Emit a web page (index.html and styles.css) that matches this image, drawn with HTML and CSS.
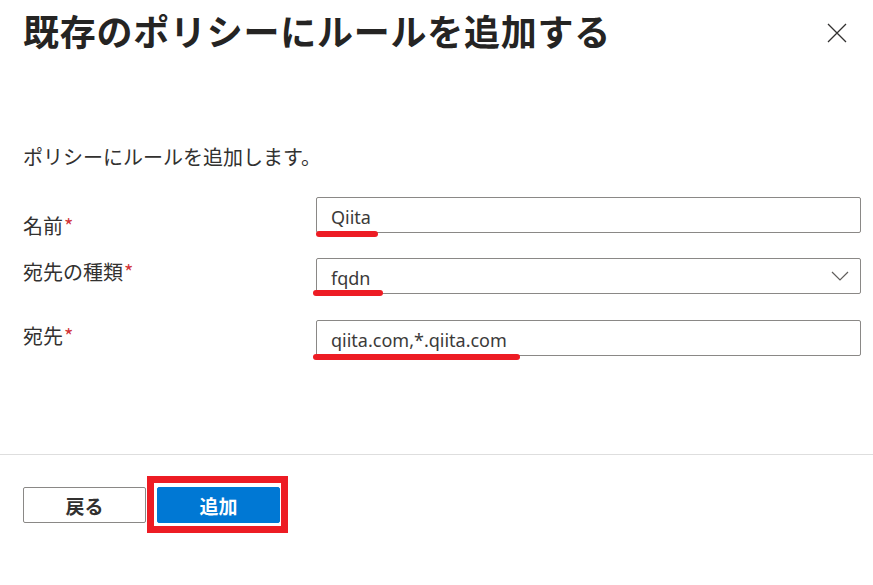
FILE: index.html
```html
<!DOCTYPE html>
<html lang="ja">
<head>
<meta charset="utf-8">
<title>既存のポリシーにルールを追加する</title>
<link rel="stylesheet" href="styles.css">
</head>
<body>
<div class="panel">
  <header class="head">
    <h1 class="title">既存のポリシーにルールを追加する</h1>
    <button class="close" aria-label="閉じる">
      <svg width="20" height="20" viewBox="0 0 20 20"><path d="M1 1 L19 19 M19 1 L1 19" stroke="#323130" stroke-width="1.3" fill="none"/></svg>
    </button>
  </header>

  <p class="desc">ポリシーにルールを追加します。</p>

  <div class="form">
    <div class="row">
      <label class="label label-1">名前<span class="req">*</span></label>
      <div class="input"><span class="value">Qiita</span></div>
    </div>
    <div class="row">
      <label class="label label-2">宛先の種類<span class="req">*</span></label>
      <div class="input select"><span class="value">fqdn</span>
        <svg class="chev" width="18" height="10" viewBox="0 0 18 10"><path d="M1 1 L9 9 L17 1" stroke="#605e5c" stroke-width="1.2" fill="none"/></svg>
      </div>
    </div>
    <div class="row row-3">
      <label class="label label-3">宛先<span class="req">*</span></label>
      <div class="input"><span class="value">qiita.com,*.qiita.com</span></div>
    </div>

    <div class="mark mark-1"></div>
    <div class="mark mark-2"></div>
    <div class="mark mark-3"></div>
  </div>

  <footer class="foot">
    <button class="btn btn-back">戻る</button>
    <button class="btn btn-primary">追加</button>
    <div class="mark-box"></div>
  </footer>
</div>
</body>
</html>
```

FILE: styles.css
```css
html, body {
  margin: 0;
  padding: 0;
  background: #ffffff;
}

body {
  width: 873px;
  height: 585px;
  overflow: hidden;
  font-family: "Noto Sans CJK JP", "Noto Sans", sans-serif;
  color: #323130;
}

.panel {
  display: flex;
  flex-direction: column;
}

.head {
  display: flex;
  align-items: flex-start;
  justify-content: space-between;
  padding: 8px 26px 0 23px;
}

.title {
  margin: 0;
  font-size: 36px;
  line-height: 44px;
  font-weight: 700;
  color: #252423;
  letter-spacing: 0.75px;
}

.close {
  border: 0;
  background: transparent;
  padding: 0;
  margin-top: 15px;
  width: 20px;
  height: 20px;
  display: flex;
}

.desc {
  margin: 91px 0 0 23px;
  font-size: 20px;
  line-height: 28px;
}

.form {
  position: relative;
  margin-top: 26px;
  padding: 0 12px 0 23px;
  display: flex;
  flex-direction: column;
  gap: 25px;
}

.row {
  display: grid;
  grid-template-columns: 293px 1fr;
  height: 36px;
}

.row-3 {
  margin-top: 1px;
}

.label {
  font-size: 20px;
  line-height: 28px;
}

.label-1 { padding-top: 15px; }
.label-2 { padding-top: 0; }
.label-3 { padding-top: 2px; }

.req {
  color: #d13438;
  margin-left: 1px;
}

.input {
  box-sizing: border-box;
  height: 36px;
  border: 1px solid #8a8886;
  border-radius: 2px;
  display: flex;
  align-items: center;
  justify-content: space-between;
  padding: 3px 11px 0 14px;
}

.value {
  font-family: "Noto Sans", "Noto Sans CJK JP", sans-serif;
  font-size: 18px;
  line-height: 24px;
  color: #3b3a39;
}

.chev {
  margin-top: -3px;
}

.mark {
  position: absolute;
  height: 6px;
  border-radius: 3px;
  background: #ed1c24;
}

.mark-1 { left: 316px; top: 34px; width: 62px; }
.mark-2 { left: 313px; top: 93px; width: 70px; }
.mark-3 { left: 313px; top: 157px; width: 207px; }

.foot {
  position: relative;
  margin-top: 98px;
  border-top: 1px solid #dedede;
  padding: 32px 0 0 23px;
  display: flex;
  gap: 11px;
  height: 130px;
  box-sizing: border-box;
}

.btn {
  box-sizing: border-box;
  width: 123px;
  height: 36px;
  border-radius: 2px;
  font-family: "Noto Sans CJK JP", sans-serif;
  font-size: 19px;
  font-weight: 700;
  padding: 0;
}

.btn-back {
  background: #ffffff;
  border: 1px solid #8a8886;
  color: #323130;
}

.btn-primary {
  background: #0078d4;
  border: 1px solid #0078d4;
  color: #ffffff;
}

.mark-box {
  position: absolute;
  left: 147px;
  top: 21px;
  width: 141px;
  height: 57px;
  box-sizing: border-box;
  border: 7px solid #ed1c24;
}
```
